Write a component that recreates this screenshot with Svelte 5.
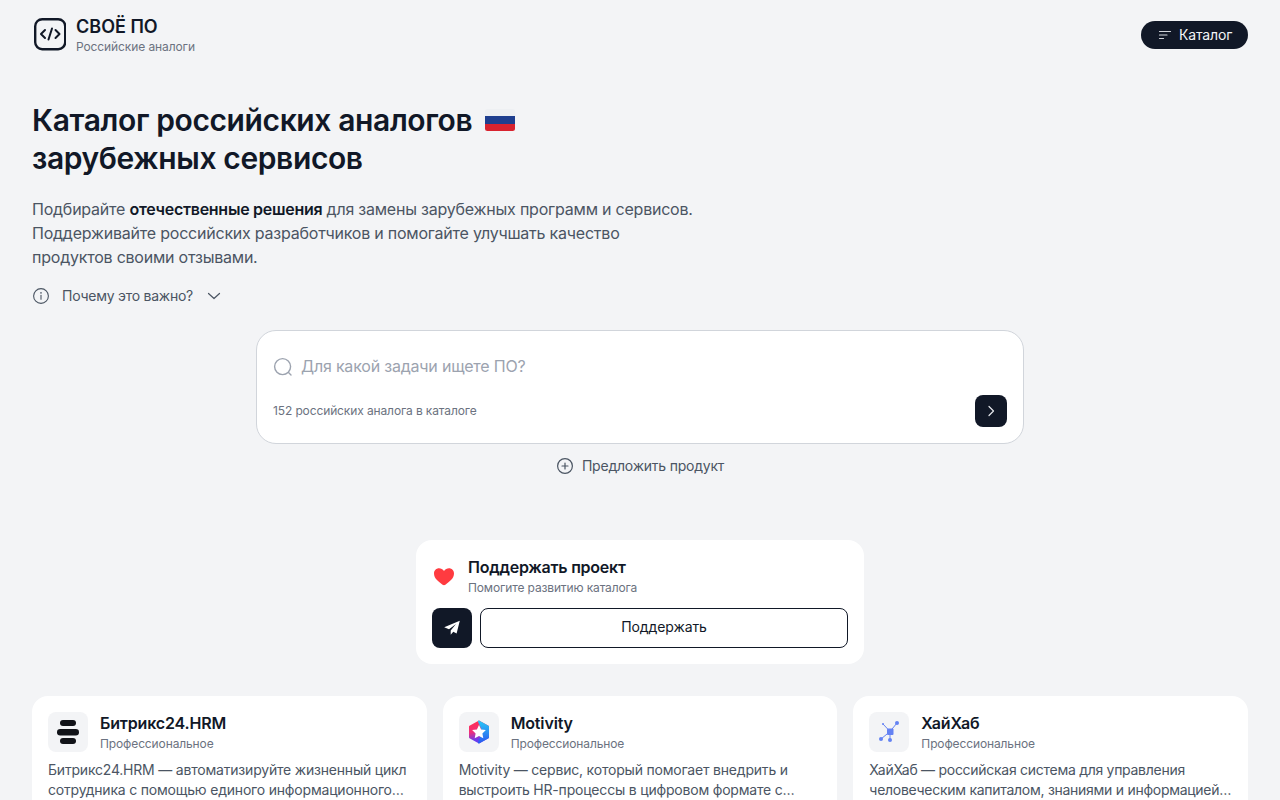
<script>
  const cards = [
    { name: 'Битрикс24.HRM', cat: 'Профессиональное', kind: 'bitrix', text: 'Битрикс24.HRM — автоматизируйте жизненный цикл сотрудника с помощью единого информационного пространства для всей вашей компании и команд' },
    { name: 'Motivity', cat: 'Профессиональное', kind: 'motivity', text: 'Motivity — сервис, который помогает внедрить и выстроить HR-процессы в цифровом формате с заботой о сотрудниках и их развитии в компании' },
    { name: 'ХайХаб', cat: 'Профессиональное', kind: 'hub', text: 'ХайХаб — российская система для управления человеческим капиталом, знаниями и информацией внутри компании любого масштаба и отрасли' }
  ];
</script>

<div class="page">
  <header class="header">
    <div class="brand">
      <svg class="logo" width="34" height="34" viewBox="0 0 34 34" fill="none" stroke="#111827" stroke-linecap="round" stroke-linejoin="round">
        <rect x="3.200" y="1.200" width="30" height="30" rx="7" stroke-width="2.400" />
        <path d="M13 12l-4 4 4 4M23.500 12l4 4-4 4M20 10.500l-3.500 11" stroke-width="2" />
      </svg>
      <div class="brand-text">
        <div class="brand-name">СВОЁ ПО</div>
        <div class="brand-sub">Российские аналоги</div>
      </div>
    </div>
    <button class="catalog-btn">
      <svg width="14" height="14" viewBox="0 0 14 14" fill="none" stroke="#d1d5db" stroke-width="1.200" stroke-linecap="round">
        <path d="M1.500 3.500h11M1.500 7h7.500M1.500 10.500h4" />
      </svg>
      <span>Каталог</span>
    </button>
  </header>

  <section class="hero">
    <h1>
      <span class="line">Каталог российских аналогов
        <svg class="flag" width="30" height="22" viewBox="0 0 30 22">
          <defs><clipPath id="flagclip"><rect width="30" height="22" rx="2.500" /></clipPath></defs>
          <g clip-path="url(#flagclip)">
            <rect width="30" height="7" fill="#eef0f3" />
            <rect y="7" width="30" height="8" fill="#1f3f8f" />
            <rect y="15" width="30" height="7" fill="#d8232f" />
          </g>
        </svg>
      </span>
      <span class="line">зарубежных сервисов</span>
    </h1>
    <p class="lead">Подбирайте <b>отечественные решения</b> для замены зарубежных программ и сервисов.<br />Поддерживайте российских разработчиков и помогайте улучшать качество<br />продуктов своими отзывами.</p>
    <button class="why">
      <svg width="18" height="18" viewBox="0 0 18 18" fill="none" stroke="#4b5563" stroke-width="1.100" stroke-linecap="round">
        <circle cx="9" cy="9" r="7.400" />
        <path d="M9 8.400v3.800" />
        <circle cx="9" cy="5.800" r="0.300" fill="#4b5563" />
      </svg>
      <span>Почему это важно?</span>
      <svg class="chev" width="14" height="14" viewBox="0 0 14 14" fill="none" stroke="#4b5563" stroke-width="1.200" stroke-linecap="round" stroke-linejoin="round">
        <path d="M1.500 4.500L7 9.500l5.500-5" />
      </svg>
    </button>
  </section>

  <section class="search-wrap">
    <div class="search">
      <div class="search-top">
        <svg width="20" height="20" viewBox="0 0 20 20" fill="none" stroke="#9ca3af" stroke-width="1.400" stroke-linecap="round">
          <circle cx="9.600" cy="9.600" r="8" />
          <path d="M15.500 15.500l2.500 2.500" />
        </svg>
        <span class="placeholder">Для какой задачи ищете ПО?</span>
      </div>
      <div class="search-bottom">
        <span class="count">152 российских аналога в каталоге</span>
        <button class="go" aria-label="Искать">
          <svg width="12" height="12" viewBox="0 0 12 12" fill="none" stroke="#e5e7eb" stroke-width="1.200" stroke-linecap="round" stroke-linejoin="round">
            <path d="M4 1.500L8.500 6 4 10.500" />
          </svg>
        </button>
      </div>
    </div>
    <button class="suggest">
      <svg width="18" height="18" viewBox="0 0 18 18" fill="none" stroke="#4b5563" stroke-width="1.200" stroke-linecap="round">
        <circle cx="9" cy="9" r="7.400" />
        <path d="M9 6v6M6 9h6" />
      </svg>
      <span>Предложить продукт</span>
    </button>
  </section>

  <section class="support">
    <div class="support-head">
      <svg width="24" height="24" viewBox="0 0 24 24">
        <path d="M12 21.200c-.5 0-1-.2-1.400-.5C6.500 17.500 2 14.300 2 9.400 2 6.300 4.300 4.200 7 4.200c2 0 3.700 1 5 2.800 1.300-1.800 3-2.800 5-2.800 2.700 0 5 2.100 5 5.200 0 4.900-4.500 8.100-8.600 11.300-.4.300-.9.500-1.400.5z" fill="#ff3b40" />
      </svg>
      <div>
        <div class="support-title">Поддержать проект</div>
        <div class="support-sub">Помогите развитию каталога</div>
      </div>
    </div>
    <div class="support-actions">
      <button class="tg" aria-label="Telegram">
        <svg width="18" height="18" viewBox="0 0 18 18">
          <path d="M16.800 1.800L1.200 8.300l4.800 2 7-5.300-5.300 6.400v4.400l2.600-3 3.300 1.700z" fill="#fff" />
        </svg>
      </button>
      <button class="donate"><span>Поддержать</span></button>
    </div>
  </section>

  <section class="cards">
    {#each cards as c}
      <article class="card">
        <div class="card-head">
          <div class="card-icon">
            {#if c.kind === 'bitrix'}
              <svg width="24" height="24" viewBox="0 0 24 24" fill="#111318">
                <rect x="4" y="0" width="16" height="6" rx="3" />
                <rect x="1" y="9" width="22" height="6.400" rx="3.200" />
                <rect x="4" y="18" width="16" height="6" rx="3" />
              </svg>
            {:else if c.kind === 'motivity'}
              <svg width="24" height="24" viewBox="0 0 24 24">
                <defs>
                  <linearGradient id="mg-l" x1="0.300" y1="0" x2="0.500" y2="1">
                    <stop offset="0" stop-color="#ff2f55" />
                    <stop offset="0.450" stop-color="#f0307a" />
                    <stop offset="0.850" stop-color="#6a3cf0" />
                  </linearGradient>
                  <linearGradient id="mg-r" x1="0.500" y1="0" x2="0.500" y2="1">
                    <stop offset="0" stop-color="#29c4f6" />
                    <stop offset="1" stop-color="#2a5cf0" />
                  </linearGradient>
                </defs>
                <path d="M12 1.500l9 5.200v10.600l-9 5.200-9-5.200V6.700z" fill="url(#mg-l)" stroke="url(#mg-l)" stroke-width="2" stroke-linejoin="round" />
                <path d="M12 1.500l9 5.200v10.600l-9 5.200 3-7 1-5z" fill="url(#mg-r)" stroke="url(#mg-r)" stroke-width="2" stroke-linejoin="round" />
                <path d="M12 5l2.100 4.400 4.800.7-3.500 3.300.9 4.800-4.300-2.300-4.300 2.300.9-4.800-3.500-3.300 4.800-.7z" fill="#fff" />
              </svg>
            {:else}
              <svg width="24" height="24" viewBox="0 0 24 24" fill="#6482f3" stroke="#6482f3">
                <g fill="none" stroke-width="1">
                  <path d="M13 11.500L6 4M13 11.500L20 3M13 11.500L4 19M13 11.500V20" />
                </g>
                <rect x="10" y="8.500" width="6.500" height="6.500" rx="1" stroke="none" />
                <circle cx="20" cy="3" r="2" stroke="none" />
                <circle cx="4" cy="19" r="2" stroke="none" />
                <circle cx="13" cy="20" r="2" stroke="none" />
                <circle cx="6" cy="4" r="1" stroke="none" />
              </svg>
            {/if}
          </div>
          <div class="card-meta">
            <div class="card-name">{c.name}</div>
            <div class="card-cat">{c.cat}</div>
          </div>
        </div>
        <p class="card-text" class:tight={c.kind === 'hub'}>{c.text}</p>
      </article>
    {/each}
  </section>
</div>

<style>
  :global(body) {
    margin: 0;
    background: #f3f4f6;
    font-family: Inter, "Noto Sans", sans-serif;
    color: #111827;
  }
  button {
    font-family: inherit;
    border: none;
    background: none;
    padding: 0;
    cursor: pointer;
  }
  .page {
    padding: 0 32px 32px;
  }
  .header {
    display: flex;
    align-items: center;
    justify-content: space-between;
    height: 70px;
  }
  .brand {
    display: flex;
    align-items: center;
    gap: 10px;
  }
  .logo {
    display: block;
  }
  .brand-text {
    display: flex;
    flex-direction: column;
    gap: 2px;
    padding-top: 2px;
  }
  .brand-name {
    font-size: 18px;
    line-height: 20px;
    font-weight: 600;
    color: #111827;
  }
  .brand-sub {
    font-size: 12px;
    line-height: 16px;
    color: #6b7280;
    letter-spacing: -0.1px;
  }
  .catalog-btn {
    display: flex;
    align-items: center;
    gap: 7px;
    height: 28px;
    width: 107px;
    padding-left: 17px;
    box-sizing: border-box;
    border-radius: 14px;
    background: #111827;
    color: #f3f4f6;
    font-size: 14px;
    font-weight: 400;
  }
  .catalog-btn span {
    padding-bottom: 2px;
    letter-spacing: -0.15px;
  }
  .hero {
    padding-top: 31px;
  }
  h1 {
    margin: 0;
    font-size: 30px;
    line-height: 38px;
    font-weight: 600;
    letter-spacing: -0.38px;
    color: #111827;
  }
  .line {
    display: flex;
    align-items: center;
    gap: 13px;
  }
  .flag {
    display: block;
  }
  .lead {
    margin: 20px 0 0;
    font-size: 16px;
    line-height: 24px;
    color: #4b5563;
    letter-spacing: -0.22px;
  }
  .lead b {
    font-weight: 600;
    color: #111827;
    letter-spacing: -0.28px;
  }
  .why {
    display: flex;
    align-items: center;
    gap: 12px;
    margin-top: 15px;
    height: 24px;
    color: #4b5563;
    font-size: 14px;
    letter-spacing: -0.25px;
  }
  .why span {
    padding-bottom: 2px;
  }
  .chev {
    margin-left: 2px;
  }
  .search-wrap {
    display: flex;
    flex-direction: column;
    align-items: center;
    margin-top: 22px;
  }
  .search {
    width: 768px;
    height: 114px;
    box-sizing: border-box;
    background: #fff;
    border: 1px solid #d1d5db;
    border-radius: 20px;
    padding: 16px;
    display: flex;
    flex-direction: column;
    justify-content: space-between;
  }
  .search-top {
    display: flex;
    align-items: center;
    gap: 8px;
    height: 40px;
  }
  .placeholder {
    font-size: 16px;
    color: #9ca3af;
    letter-spacing: -0.2px;
    padding-bottom: 2px;
  }
  .search-bottom {
    display: flex;
    align-items: center;
    justify-content: space-between;
  }
  .count {
    font-size: 12px;
    color: #6b7280;
    letter-spacing: -0.12px;
    padding-bottom: 2px;
  }
  .go {
    width: 32px;
    height: 32px;
    border-radius: 8px;
    background: #111827;
    display: flex;
    align-items: center;
    justify-content: center;
  }
  .suggest {
    display: flex;
    align-items: center;
    gap: 8px;
    margin-top: 12px;
    height: 20px;
    color: #4b5563;
    font-size: 14px;
    letter-spacing: -0.22px;
  }
  .suggest span {
    padding-bottom: 2px;
  }
  .support {
    width: 448px;
    height: 124px;
    box-sizing: border-box;
    margin: 64px auto 0;
    padding: 16px;
    background: #fff;
    border-radius: 16px;
  }
  .support-head {
    display: flex;
    align-items: center;
    gap: 12px;
  }
  .support-title {
    font-size: 16px;
    line-height: 22px;
    margin-bottom: 2px;
    font-weight: 600;
    color: #111827;
    letter-spacing: -0.24px;
  }
  .support-sub {
    font-size: 12px;
    line-height: 16px;
    color: #6b7280;
    letter-spacing: -0.14px;
  }
  .support-actions {
    display: flex;
    gap: 8px;
    margin-top: 12px;
  }
  .tg {
    width: 40px;
    height: 40px;
    border-radius: 8px;
    background: #111827;
    display: flex;
    align-items: center;
    justify-content: center;
  }
  .donate {
    flex: 1;
    height: 40px;
    box-sizing: border-box;
    border: 1px solid #111827;
    border-radius: 8px;
    background: #fff;
    color: #111827;
    font-size: 14px;
    font-weight: 400;
    letter-spacing: -0.1px;
  }
  .donate span {
    display: block;
    padding-bottom: 3px;
  }
  .cards {
    display: grid;
    grid-template-columns: repeat(3, 1fr);
    gap: 16px;
    margin-top: 32px;
  }
  .card {
    background: #fff;
    border-radius: 16px;
    padding: 16px;
  }
  .card-head {
    display: flex;
    gap: 12px;
  }
  .card-icon {
    width: 40px;
    height: 40px;
    border-radius: 8px;
    background: #f3f4f6;
    display: flex;
    align-items: center;
    justify-content: center;
    flex: none;
  }
  .card-name {
    font-size: 16px;
    line-height: 22px;
    margin-bottom: 2px;
    font-weight: 600;
    color: #111827;
    letter-spacing: -0.15px;
  }
  .card-cat {
    font-size: 12px;
    line-height: 16px;
    color: #6b7280;
    letter-spacing: -0.12px;
  }
  .card-text {
    margin: 8px 0 0;
    font-size: 14px;
    line-height: 20px;
    color: #4b5563;
    letter-spacing: -0.2px;
    display: -webkit-box;
    -webkit-line-clamp: 2;
    -webkit-box-orient: vertical;
    overflow: hidden;
  }
  .card-text.tight {
    letter-spacing: -0.28px;
  }
</style>
